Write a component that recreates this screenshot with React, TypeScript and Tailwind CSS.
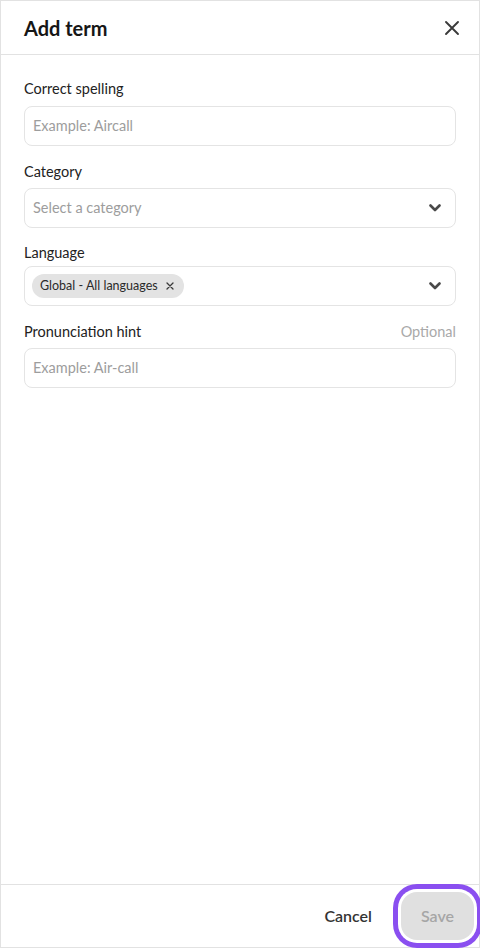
import React from "react";

const font = { fontFamily: "Lato, 'Noto Sans', sans-serif" };

function Chevron() {
  return (
    <svg width="12" height="8" viewBox="0 0 12 8" className="shrink-0">
      <path d="M1.5 1.5 L6 6 L10.5 1.5" fill="none" stroke="#4a4a4a" strokeWidth="2.6" strokeLinecap="round" strokeLinejoin="round" />
    </svg>
  );
}

export default function App() {
  return (
    <div style={font} className="w-[480px] h-[948px] bg-white border border-[#e2e2e2] flex flex-col text-[#222222]">
      <div className="h-[54px] shrink-0 flex items-center justify-between pl-[23px] pr-[15px] border-b border-[#e2e2e2]">
        <h1 className="text-[20px] font-bold text-[#161616]">Add term</h1>
        <button className="w-[24px] h-[24px] flex items-center justify-center">
          <svg width="16" height="16" viewBox="0 0 16 16">
            <path d="M2 2 L14 14 M14 2 L2 14" stroke="#3a3a3a" strokeWidth="1.9" strokeLinecap="round" />
          </svg>
        </button>
      </div>

      <div className="flex-1 px-[23px] pt-[24px] flex flex-col">
        <label className="text-[14.5px] leading-[20px] mb-[7px]">Correct spelling</label>
        <div className="h-[40px] rounded-[8px] border border-[#e4e4e4] flex items-center px-[8px] text-[14.5px] text-[#9d9d9d]">
          Example: Aircall
        </div>

        <label className="text-[14.5px] leading-[20px] mt-[16px] mb-[6px]">Category</label>
        <div className="h-[40px] rounded-[8px] border border-[#e4e4e4] flex items-center justify-between pl-[8px] pr-[14px] text-[14.5px] text-[#9d9d9d]">
          <span>Select a category</span>
          <Chevron />
        </div>

        <label className="text-[14.5px] leading-[20px] mt-[15px] mb-[3px]">Language</label>
        <div className="h-[40px] rounded-[8px] border border-[#e4e4e4] flex items-center justify-between pl-[7px] pr-[14px]">
          <span className="h-[24px] rounded-full bg-[#e3e3e3] flex items-center gap-[8px] pl-[8px] pr-[10px] text-[12.5px] text-[#2a2a2a]">
            Global - All languages
            <svg width="8" height="8" viewBox="0 0 8 8">
              <path d="M1 1 L7 7 M7 1 L1 7" stroke="#3a3a3a" strokeWidth="1.3" strokeLinecap="round" />
            </svg>
          </span>
          <Chevron />
        </div>

        <div className="mt-[16px] mb-[6px] flex items-center justify-between text-[14.5px] leading-[20px]">
          <span>Pronunciation hint</span>
          <span className="text-[#a9a9a9]">Optional</span>
        </div>
        <div className="h-[40px] rounded-[8px] border border-[#e4e4e4] flex items-center px-[8px] text-[14.5px] text-[#9d9d9d]">
          Example: Air-call
        </div>
      </div>

      <div className="h-[63px] shrink-0 border-t border-[#e2e2e2] flex items-center justify-end pr-[5px] gap-[29px]">
        <button className="text-[16px] font-semibold text-[#333333]">Cancel</button>
        <button className="w-[73px] h-[48px] rounded-[16px] bg-[#e0e0e0] text-[16px] font-semibold text-[#a6a6a6] ring-[5px] ring-[#8a4ff0] ring-offset-[3px] ring-offset-white">
          Save
        </button>
      </div>
    </div>
  );
}
